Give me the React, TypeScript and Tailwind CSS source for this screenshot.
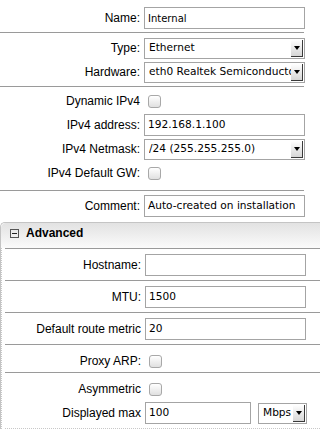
import type { ReactNode } from "react";

const fieldFont = "font-['DejaVu_Sans','Bitstream_Vera_Sans',sans-serif]";

function Row({ label, children, h = "h-6" }: { label: string; children: ReactNode; h?: string }) {
  return (
    <div className={`flex items-center ${h}`}>
      <div className="w-[141px] shrink-0 pr-[1px] text-right whitespace-nowrap">{label}</div>
      <div className="ml-[3px] flex items-center">{children}</div>
    </div>
  );
}

function TextInput({ value, w = "w-[161px]", small }: { value: string; w?: string; small?: boolean }) {
  return (
    <div
      className={[
        "flex h-[22px] items-center overflow-hidden whitespace-nowrap border border-[#a4a4a4] bg-white px-[3px]",
        w,
        fieldFont,
        small ? "text-[10px]" : "text-[10.6px]",
      ].join(" ")}
    >
      {value}
    </div>
  );
}

function Select({ value, w = "w-[161px]" }: { value: string; w?: string }) {
  return (
    <div
      className={[
        "flex h-[21px] items-center border border-[#a4a4a4] bg-white pl-[4px] pr-[1px] text-[10.6px]",
        w,
        fieldFont,
      ].join(" ")}
    >
      <div className="min-w-0 flex-1 overflow-hidden whitespace-nowrap">{value}</div>
      <div className="flex h-[17px] w-[12px] shrink-0 items-center justify-center border-r border-b border-[#3a3a3a] bg-linear-to-b from-white to-[#d6d6d6]">
        <div className="h-0 w-0 border-x-[3px] border-t-[4px] border-x-transparent border-t-black" />
      </div>
    </div>
  );
}

function Checkbox() {
  return (
    <div className="ml-[4px] h-[13px] w-[13px] rounded-[3px] border border-[#a8a8a8] bg-linear-to-b from-white to-[#e0e0e0]" />
  );
}

function Divider({ full }: { full?: boolean }) {
  return <div className={`h-px bg-[#9a9a9a] ${full ? "w-full" : "w-[304px]"}`} />;
}

export default function App() {
  return (
    <div className="h-[435px] w-[320px] overflow-hidden bg-white font-['Liberation_Sans',Arial,sans-serif] text-[12px] text-black">
      <div className="w-[320px]">
        <div className="pt-[6px] pb-[2px]">
          <Row label="Name:">
            <TextInput value="Internal" small />
          </Row>
        </div>
        <Divider />
        <div className="pt-[3px] pb-[2px]">
          <Row label="Type:">
            <Select value="Ethernet" />
          </Row>
          <Row label="Hardware:">
            <Select value="eth0 Realtek Semiconductor Co., Ltd." />
          </Row>
        </div>
        <Divider />
        <div className="pt-[2px] pb-[5px]">
          <Row label="Dynamic IPv4">
            <Checkbox />
          </Row>
          <Row label="IPv4 address:">
            <TextInput value="192.168.1.100" />
          </Row>
          <Row label="IPv4 Netmask:">
            <Select value="/24 (255.255.255.0)" />
          </Row>
          <Row label="IPv4 Default GW:">
            <Checkbox />
          </Row>
        </div>
        <Divider />
        <div className="pt-[3px] pb-[3px]">
          <Row label="Comment:">
            <TextInput value="Auto-created on installation" />
          </Row>
        </div>

        <div className="mt-[1px] rounded-tl-[5px] border-t border-l border-t-[#c4c4c4] border-l-[#c4c4c4]">
          <div className="h-[25px] rounded-tl-[5px] bg-linear-to-b from-[#e2e2e2] to-[#fbfbfb] pt-[2px] pl-[9px]">
            <div className="flex items-center gap-[7px] leading-[16px]">
              <div className="flex h-[9px] w-[9px] items-center justify-center border border-[#555]">
                <div className="h-px w-[5px] bg-[#222]" />
              </div>
              <span className="text-[12px] font-bold">Advanced</span>
            </div>
          </div>
          <div className="border-l border-dotted border-l-[#c8c8c8] pl-[3px]">
            <Divider full />
            <div className="-ml-[4px] pt-[4px] pb-[3px]">
              <Row label="Hostname:">
                <TextInput value="" />
              </Row>
            </div>
            <Divider full />
            <div className="-ml-[4px] pt-[4px] pb-[3px]">
              <Row label="MTU:">
                <TextInput value="1500" />
              </Row>
            </div>
            <Divider full />
            <div className="-ml-[4px] pt-[4px] pb-[3px]">
              <Row label="Default route metric">
                <TextInput value="20" />
              </Row>
            </div>
            <Divider full />
            <div className="-ml-[4px] pt-[5px]">
              <Row label="Proxy ARP:" h="h-[22px]">
                <Checkbox />
              </Row>
            </div>
            <Divider full />
            <div className="-ml-[4px] pt-[4px] pb-[3px]">
              <Row label="Asymmetric">
                <Checkbox />
              </Row>
              <Row label="Displayed max">
                <TextInput value="100" w="w-[106px]" />
                <div className="ml-[7px]">
                  <Select value="Mbps" w="w-[49px]" />
                </div>
              </Row>
            </div>
            <div className="border-b border-dotted border-b-[#c8c8c8]" />
          </div>
        </div>
      </div>
    </div>
  );
}
